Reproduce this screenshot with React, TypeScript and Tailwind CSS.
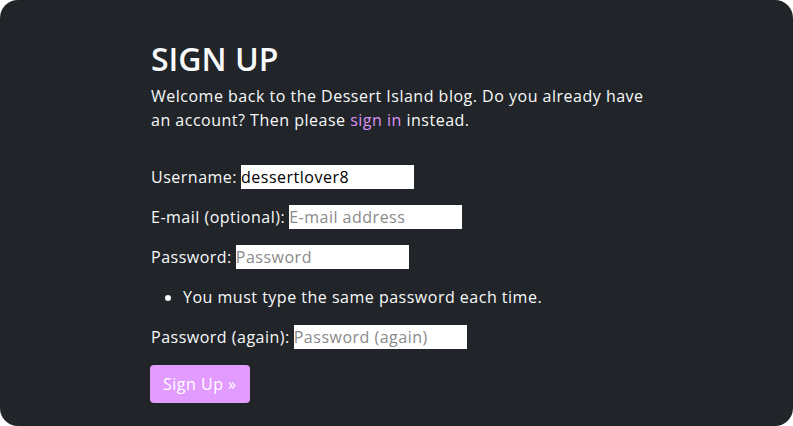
export default function App() {
  return (
    <div className="h-[426px] w-[793px] overflow-hidden bg-white">
      <div className="h-full w-full rounded-[18px] bg-[#212529] pl-[151px] pt-[40px] text-[16px] leading-6 tracking-[0.5px] text-[#f8f9fa] [font-family:'Open_Sans',sans-serif]">
        <h1 className="text-[32px] font-semibold leading-[38px] tracking-normal">SIGN UP</h1>
        <p className="mt-[6px] w-[500px]">
          Welcome back to the Dessert Island blog. Do you already have an account? Then please{" "}
          <a href="#" className="text-[#d990f5]">sign in</a> instead.
        </p>
        <form className="mt-[33px] flex flex-col gap-4" onSubmit={(e) => e.preventDefault()}>
          <label className="flex items-center">
            Username:
            <input
              className="ml-[4px] h-6 w-[173px] bg-white text-black outline-none"
              defaultValue="dessertlover8"
            />
          </label>
          <label className="flex items-center">
            E-mail (optional):
            <input
              className="ml-[4px] h-6 w-[173px] bg-white text-black outline-none placeholder:text-[#8a8a8a]"
              placeholder="E-mail address"
            />
          </label>
          <label className="flex items-center">
            Password:
            <input
              type="password"
              className="ml-[4px] h-6 w-[173px] bg-white text-black outline-none placeholder:text-[#8a8a8a]"
              placeholder="Password"
            />
          </label>
          <ul className="list-disc pl-8">
            <li>You must type the same password each time.</li>
          </ul>
          <label className="flex items-center">
            Password (again):
            <input
              type="password"
              className="ml-[4px] h-6 w-[173px] bg-white text-black outline-none placeholder:text-[#8a8a8a]"
              placeholder="Password (again)"
            />
          </label>
          <div>
            <button
              type="submit"
              className="ml-[-1px] h-[38px] rounded-[4px] bg-[#e29cff] px-[13px] text-white"
            >
              Sign Up »
            </button>
          </div>
        </form>
      </div>
    </div>
  );
}
